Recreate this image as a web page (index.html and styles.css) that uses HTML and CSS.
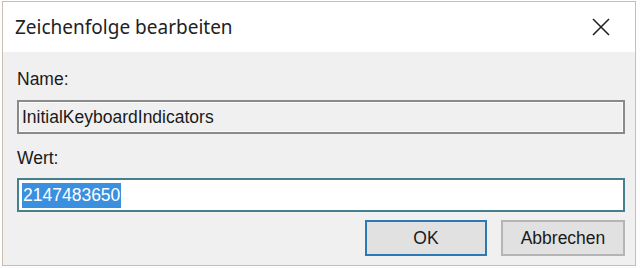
FILE: index.html
```html
<!DOCTYPE html>
<html>
<head>
  <title>Zeichenfolge bearbeiten</title>
  <link rel="stylesheet" href="styles.css">
</head>
<body>
<div class="window">
  <div class="titlebar">
    <span class="title">Zeichenfolge bearbeiten</span>
    <svg class="close" width="18" height="18" viewBox="0 0 18 18">
      <path d="M1 1 L17 17 M17 1 L1 17" stroke="#222" stroke-width="1.6" fill="none"/>
    </svg>
  </div>
  <div class="client">
    <div class="label">Name:</div>
    <div class="field readonly">InitialKeyboardIndicators</div>
    <div class="label second">Wert:</div>
    <div class="field focused"><span class="sel">2147483650</span></div>
    <div class="buttons">
      <div class="btn default">OK</div>
      <div class="btn">Abbrechen</div>
    </div>
  </div>
</div>
</body>
</html>
```

FILE: styles.css
```css
body {
  margin: 0;
  background: #fdfdfd;
  font-family: "Liberation Sans", Arial, sans-serif;
}
.window {
  margin: 1px 0 0 2px;
  width: 634px;
  height: 265px;
  box-sizing: border-box;
  border: 1px solid #cbbdaf;
  display: flex;
  flex-direction: column;
}
.titlebar {
  height: 50px;
  background: #fff;
  display: flex;
  align-items: center;
  justify-content: space-between;
  padding: 0 25px 0 12px;
}
.title {
  font-family: "Noto Sans", "Open Sans", sans-serif;
  font-size: 19px;
  color: #222;
}
.client {
  flex: 1;
  background: #f0f0f0;
  padding: 17px 10px 0 14px;
}
.label {
  font-size: 17.5px;
  line-height: 20px;
  color: #1a1a1a;
  margin-bottom: 11px;
}
.label.second {
  margin-top: 14px;
  margin-bottom: 10px;
}
.field {
  height: 34px;
  box-sizing: border-box;
  font-size: 17.5px;
  line-height: 30px;
  padding-left: 3px;
  color: #1a1a1a;
}
.readonly {
  border: 2px solid #8a8a8a;
  box-shadow: inset 0 0 0 1px #fbfbfb;
  background: #f0f0f0;
}
.focused {
  border: 2px solid #45808f;
  background: #fff;
}
.sel {
  background: #3a8fde;
  color: #fff;
  padding: 2px 1px 3px 1px;
}
.buttons {
  display: flex;
  justify-content: flex-end;
  gap: 14px;
  margin-top: 8px;
}
.btn {
  width: 124px;
  height: 36px;
  box-sizing: border-box;
  border: 2px solid #b5b5b5;
  background: #e1e1e1;
  font-size: 17.5px;
  display: flex;
  align-items: center;
  justify-content: center;
  color: #1a1a1a;
}
.btn.default {
  width: 122px;
  border-color: #2c79b5;
}
```
